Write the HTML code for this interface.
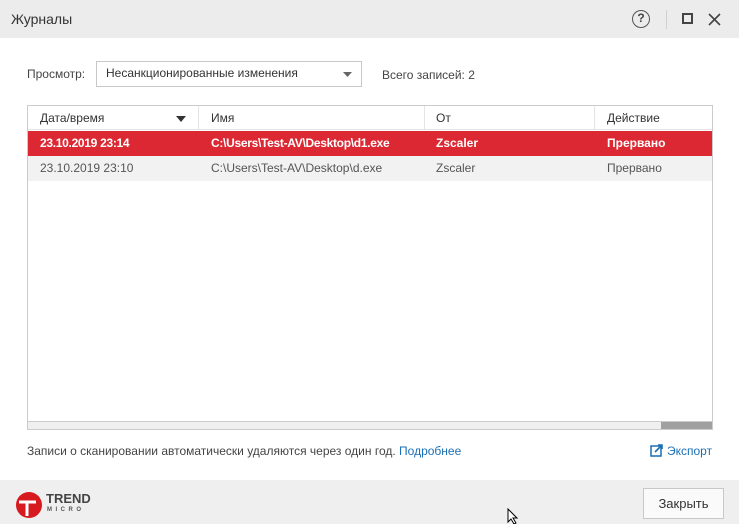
<!DOCTYPE html>
<html><head><meta charset="utf-8"><style>
*{margin:0;padding:0;box-sizing:border-box}
body{width:739px;height:524px;background:#fff;font-family:"Liberation Sans",sans-serif;font-size:12px;color:#333;position:relative;overflow:hidden;letter-spacing:0}
.abs{position:absolute;white-space:nowrap}
</style></head><body>
<div class="abs" style="left:0;top:0;width:739px;height:38px;background:#ececec"></div>
<div class="abs" style="left:11px;top:11px;font-size:14px;color:#333">Журналы</div>
<div class="abs" style="left:632px;top:10px;width:18px;height:18px;border:1.5px solid #555;border-radius:50%;text-align:center;font-size:12px;line-height:15px;color:#444;font-weight:bold">?</div>
<div class="abs" style="left:666px;top:10px;width:1px;height:19px;background:#d0d0d0"></div>
<div class="abs" style="left:682px;top:13px;width:11px;height:11px;border:2px solid #444"></div>
<svg class="abs" style="left:708px;top:13px" width="13" height="13"><path d="M1 1L12 12M12 1L1 12" stroke="#444" stroke-width="1.6"/></svg>

<div class="abs" style="left:27px;top:67px;color:#444">Просмотр:</div>
<div class="abs" style="left:96px;top:61px;width:266px;height:26px;border:1px solid #c8c8c8;background:#fff"></div>
<div class="abs" style="left:106px;top:66px;color:#333">Несанкционированные изменения</div>
<svg class="abs" style="left:343px;top:72px" width="9" height="5"><path d="M0 0H9L4.5 5Z" fill="#666"/></svg>
<div class="abs" style="left:382px;top:68px;color:#444">Всего записей: 2</div>

<div class="abs" style="left:27px;top:105px;width:686px;height:325px;border:1px solid #ccc;background:#fff"></div>
<div class="abs" style="left:28px;top:106px;width:684px;height:24px;background:#fff;border-bottom:1px solid #e4e4e4"></div>
<div class="abs" style="left:198px;top:106px;width:1px;height:24px;background:#e4e4e4"></div>
<div class="abs" style="left:424px;top:106px;width:1px;height:24px;background:#e4e4e4"></div>
<div class="abs" style="left:594px;top:106px;width:1px;height:24px;background:#e4e4e4"></div>
<div class="abs" style="left:40px;top:111px;color:#333">Дата/время</div>
<svg class="abs" style="left:176px;top:116px" width="10" height="6"><path d="M0 0H10L5 6Z" fill="#333"/></svg>
<div class="abs" style="left:211px;top:111px;color:#333">Имя</div>
<div class="abs" style="left:436px;top:111px;color:#333">От</div>
<div class="abs" style="left:607px;top:111px;color:#333">Действие</div>

<div class="abs" style="left:28px;top:131px;width:684px;height:25px;background:#dc2832"></div>
<div class="abs" style="left:40px;top:136px;color:#fff;font-weight:bold;letter-spacing:-0.3px">23.10.2019 23:14</div>
<div class="abs" style="left:211px;top:136px;color:#fff;font-weight:bold;letter-spacing:-0.3px">C:\Users\Test-AV\Desktop\d1.exe</div>
<div class="abs" style="left:436px;top:136px;color:#fff;font-weight:bold">Zscaler</div>
<div class="abs" style="left:607px;top:136px;color:#fff;font-weight:bold">Прервано</div>

<div class="abs" style="left:28px;top:156px;width:684px;height:25px;background:#f2f2f2"></div>
<div class="abs" style="left:40px;top:161px;color:#555">23.10.2019 23:10</div>
<div class="abs" style="left:211px;top:161px;color:#555">C:\Users\Test-AV\Desktop\d.exe</div>
<div class="abs" style="left:436px;top:161px;color:#555">Zscaler</div>
<div class="abs" style="left:607px;top:161px;color:#555">Прервано</div>

<div class="abs" style="left:28px;top:421px;width:684px;height:8px;background:#efefef;border-top:1px solid #ccc"></div>
<div class="abs" style="left:661px;top:422px;width:51px;height:7px;background:#a0a0a0"></div>

<div class="abs" style="left:27px;top:444px;color:#444">Записи о сканировании автоматически удаляются через один год. <span style="color:#1a6fb5">Подробнее</span></div>
<svg class="abs" style="left:650px;top:444px" width="13" height="13"><rect x="1" y="2" width="10" height="10" fill="none" stroke="#1a6fb5" stroke-width="1.5"/><path d="M5 8L12 1M8 1H12V5" stroke="#1a6fb5" stroke-width="1.6" fill="none"/></svg>
<div class="abs" style="left:667px;top:444px;color:#1a6fb5">Экспорт</div>

<div class="abs" style="left:0;top:480px;width:739px;height:44px;background:#efefef"></div>
<svg class="abs" style="left:14px;top:490px" width="30" height="30"><circle cx="15" cy="15" r="13" fill="#d71920"/><path d="M5 12H22M13 12V26" stroke="#fff" stroke-width="3"/></svg>
<div class="abs" style="left:46px;top:491px;font-weight:bold;font-size:13px;color:#444;letter-spacing:0">TREND</div>
<div class="abs" style="left:47px;top:507px;font-size:6px;color:#555;letter-spacing:3.5px;font-weight:bold">MICRO</div>
<div class="abs" style="left:643px;top:488px;width:81px;height:31px;border:1px solid #c8c8c8;background:#fafafa;text-align:center;line-height:29px;font-size:13px;color:#333">Закрыть</div>
<svg class="abs" style="left:507px;top:508px" width="12" height="16"><path d="M1 1V14L4 11L7 16L9 15L6 10H10Z" fill="#fff" stroke="#000" stroke-width="1"/></svg>
</body></html>
